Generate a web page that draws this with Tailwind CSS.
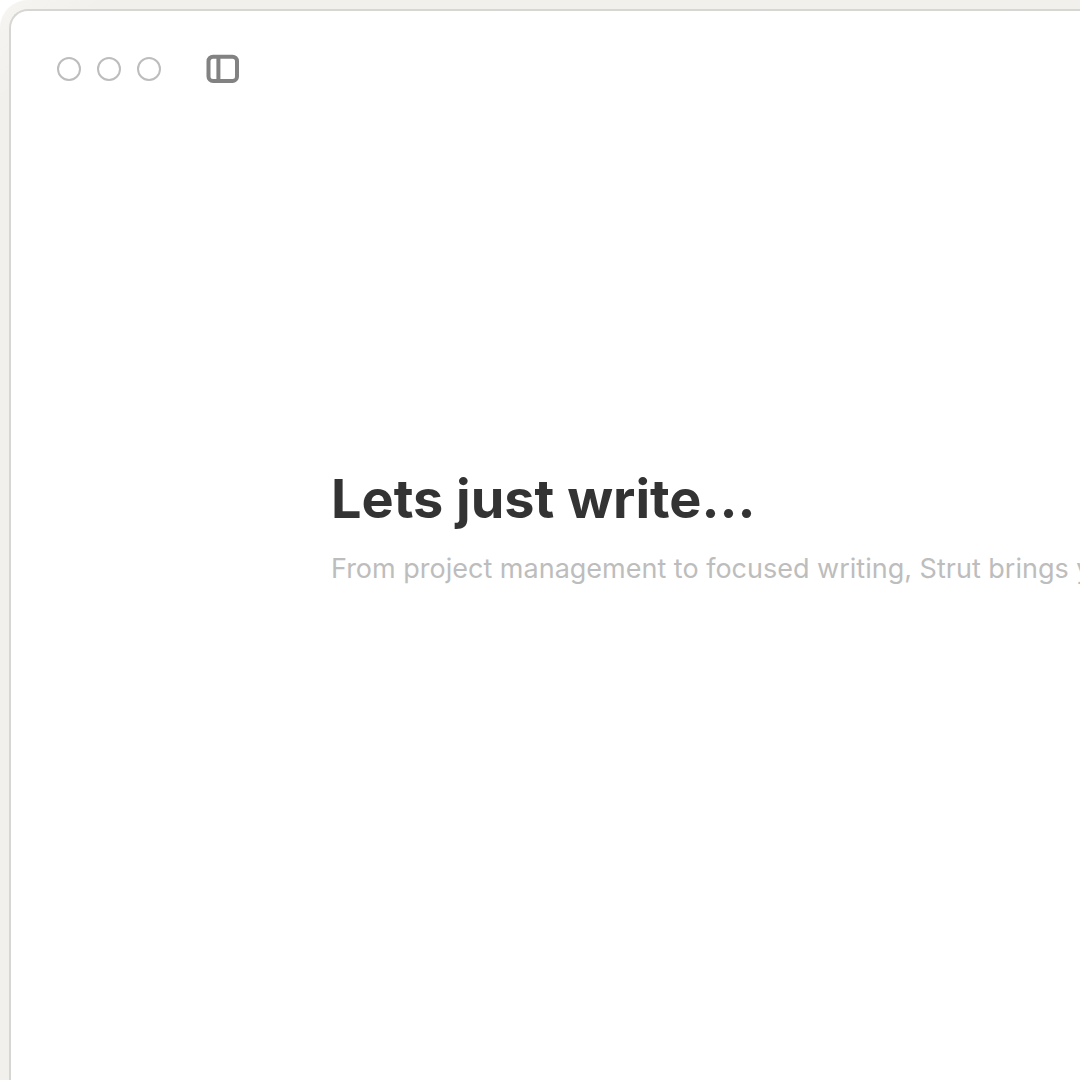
<!DOCTYPE html>
<html lang="en">
<head>
<meta charset="utf-8">
<meta name="viewport" content="width=device-width, initial-scale=1">
<title>Strut</title>
<script src="https://cdn.jsdelivr.net/npm/@tailwindcss/browser@4"></script>
</head>
<body class="bg-white overflow-hidden font-['Inter',sans-serif]">
<div class="flex min-h-screen rounded-tl-[28px] bg-[#f1f0ec] bg-linear-to-br from-[#f6f5f2] from-0% to-[#f1f0ec] to-5% pt-[9px] pl-[9px]">
  <div class="flex min-w-0 flex-1 flex-col rounded-tl-[19px] border-t-2 border-l-2 border-[#d6d6d3] bg-white">
    <header class="flex items-center px-[46px] pt-[42px]">
      <div class="flex gap-4" aria-hidden="true">
        <span class="size-6 rounded-full border-2 border-[#bdbdbd]"></span>
        <span class="size-6 rounded-full border-2 border-[#bdbdbd]"></span>
        <span class="size-6 rounded-full border-2 border-[#bdbdbd]"></span>
      </div>
      <button type="button" class="ml-11" aria-label="Toggle sidebar">
        <svg class="block h-8 w-9" viewBox="0 0 36 32" fill="none" stroke="#828282" stroke-width="4">
          <rect x="3.5" y="3.7" width="28.5" height="24.3" rx="4.5"/>
          <path d="M13.4 4v24"/>
        </svg>
      </button>
    </header>
    <main class="mt-[378px] pl-80">
      <h1 class="text-[54px] leading-[72px] font-bold text-[#333333] whitespace-nowrap">Lets just write...</h1>
      <p class="mt-3.5 text-[27px] leading-10 text-[#bdbdbd] whitespace-nowrap">From project management to focused writing, Strut brings you</p>
    </main>
  </div>
</div>
</body>
</html>
